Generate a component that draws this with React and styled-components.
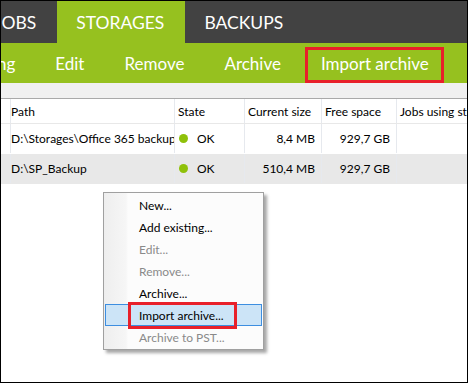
import * as React from 'react';
import styled, { createGlobalStyle } from 'styled-components';

const GlobalStyle = createGlobalStyle`
  html, body {
    margin: 0;
    padding: 0;
    background: #fff;
  }
  body {
    font-family: Lato, "Noto Sans", sans-serif;
  }
`;

const Frame = styled.div`
  position: relative;
  width: 468px;
  height: 383px;
  box-sizing: border-box;
  border: 1px solid #000;
  overflow: hidden;
  background: #fff;
`;

const TabBar = styled.div`
  display: flex;
  height: 42px;
  background: #424242;
  overflow: hidden;
`;

const TabStrip = styled.div`
  display: flex;
  margin-left: -26px;
`;

const Tab = styled.div`
  display: flex;
  align-items: center;
  padding: 0 21px 0 19px;
  font-size: 17.5px;
  color: #fff;
  background: ${p => (p.$active ? '#96c11f' : 'transparent')};
  white-space: nowrap;
`;

const Toolbar = styled.div`
  display: flex;
  height: 40px;
  background: #96c11f;
  overflow: hidden;
`;

const ToolStrip = styled.div`
  display: flex;
  align-items: stretch;
  margin-left: -98px;
`;

const ToolButton = styled.div`
  position: relative;
  display: flex;
  align-items: center;
  padding: 0 20px;
  font-size: 17px;
  color: #fff;
  white-space: nowrap;

  ${p =>
    p.$marked &&
    `
    &::after {
      content: '';
      position: absolute;
      left: 4px;
      right: 5px;
      top: 4px;
      bottom: 0;
      border: 3px solid #e8202a;
    }
  `}
`;

const Spacer = styled.div`
  height: 15px;
  background: #f0f0f0;
  border-bottom: 1px solid #a9a9a9;
`;

const Grid = styled.div`
  font-size: 12px;
  color: #000;
`;

const Row = styled.div`
  display: grid;
  grid-template-columns: 7px 167px 70px 77px 75px 200px;
  height: ${p => (p.$head ? 25 : 30)}px;
  background: ${p => (p.$shaded ? '#e8e8e8' : '#fff')};
  border-bottom: 1px solid ${p => (p.$head ? '#e8e8e8' : 'transparent')};
  box-sizing: border-box;
`;

const Cell = styled.div`
  display: flex;
  align-items: center;
  justify-content: ${p => (p.$right ? 'flex-end' : 'flex-start')};
  gap: 9px;
  padding: 0 6px 0 ${p => (p.$right ? 0 : 3)}px;
  border-right: 1px solid #e6e9ee;
  white-space: nowrap;
  overflow: hidden;
`;

const Dot = styled.span`
  width: 9px;
  height: 9px;
  border-radius: 50%;
  background: #8fc10a;
  margin-left: 1px;
`;

const Menu = styled.div`
  position: absolute;
  left: 102px;
  top: 191px;
  width: 161px;
  padding: 1px;
  box-sizing: border-box;
  background: linear-gradient(to right, #eeeeee 0, #f6f6f6 22px, #fcfcfc 24px, #fcfcfc 100%);
  border: 1px solid #a0a0a0;
  box-shadow: 3px 3px 3px rgba(0, 0, 0, 0.35);
  font-size: 12px;
`;

const MenuItem = styled.div`
  height: 22px;
  display: flex;
  align-items: center;
  padding-left: 33px;
  box-sizing: border-box;
  color: ${p => (p.$disabled ? '#8a8a8a' : '#000')};
  background: ${p => (p.$hover ? '#cce4f7' : 'transparent')};
  border: 1px solid ${p => (p.$hover ? '#3d8ee0' : 'transparent')};
`;

const MarkedLabel = styled.span`
  position: relative;

  &::after {
    content: '';
    position: absolute;
    left: -11px;
    right: -13px;
    top: -6px;
    bottom: -6px;
    border: 3px solid #e8202a;
  }
`;

const tabs = ['JOBS', 'STORAGES', 'BACKUPS'];
const tools = ['Add existing', 'Edit', 'Remove', 'Archive', 'Import archive'];

const rows = [
  { path: 'D:\\Storages\\Office 365 backup', state: 'OK', size: '8,4 MB', free: '929,7 GB' },
  { path: 'D:\\SP_Backup', state: 'OK', size: '510,4 MB', free: '929,7 GB' },
];

const menuItems = [
  { label: 'New...' },
  { label: 'Add existing...' },
  { label: 'Edit...', disabled: true },
  { label: 'Remove...', disabled: true },
  { label: 'Archive...' },
  { label: 'Import archive...', hover: true },
  { label: 'Archive to PST...', disabled: true },
];

function App() {
  return (
    <Frame>
      <GlobalStyle />
      <TabBar>
        <TabStrip>
          {tabs.map(t => (
            <Tab key={t} $active={t === 'STORAGES'}>{t}</Tab>
          ))}
        </TabStrip>
      </TabBar>
      <Toolbar>
        <ToolStrip>
          {tools.map(t => (
            <ToolButton key={t} $marked={t === 'Import archive'}>{t}</ToolButton>
          ))}
        </ToolStrip>
      </Toolbar>
      <Spacer />
      <Grid>
        <Row $head>
          <Cell />
          <Cell>Path</Cell>
          <Cell>State</Cell>
          <Cell>Current size</Cell>
          <Cell>Free space</Cell>
          <Cell>Jobs using storage</Cell>
        </Row>
        {rows.map((r, i) => (
          <Row key={r.path} $shaded={i === 1}>
            <Cell />
            <Cell>{r.path}</Cell>
            <Cell><Dot />{r.state}</Cell>
            <Cell $right>{r.size}</Cell>
            <Cell $right>{r.free}</Cell>
            <Cell />
          </Row>
        ))}
      </Grid>
      <Menu>
        {menuItems.map(m => (
          <MenuItem key={m.label} $disabled={m.disabled} $hover={m.hover}>
            {m.hover ? <MarkedLabel>{m.label}</MarkedLabel> : m.label}
          </MenuItem>
        ))}
      </Menu>
    </Frame>
  );
}

export default App;
